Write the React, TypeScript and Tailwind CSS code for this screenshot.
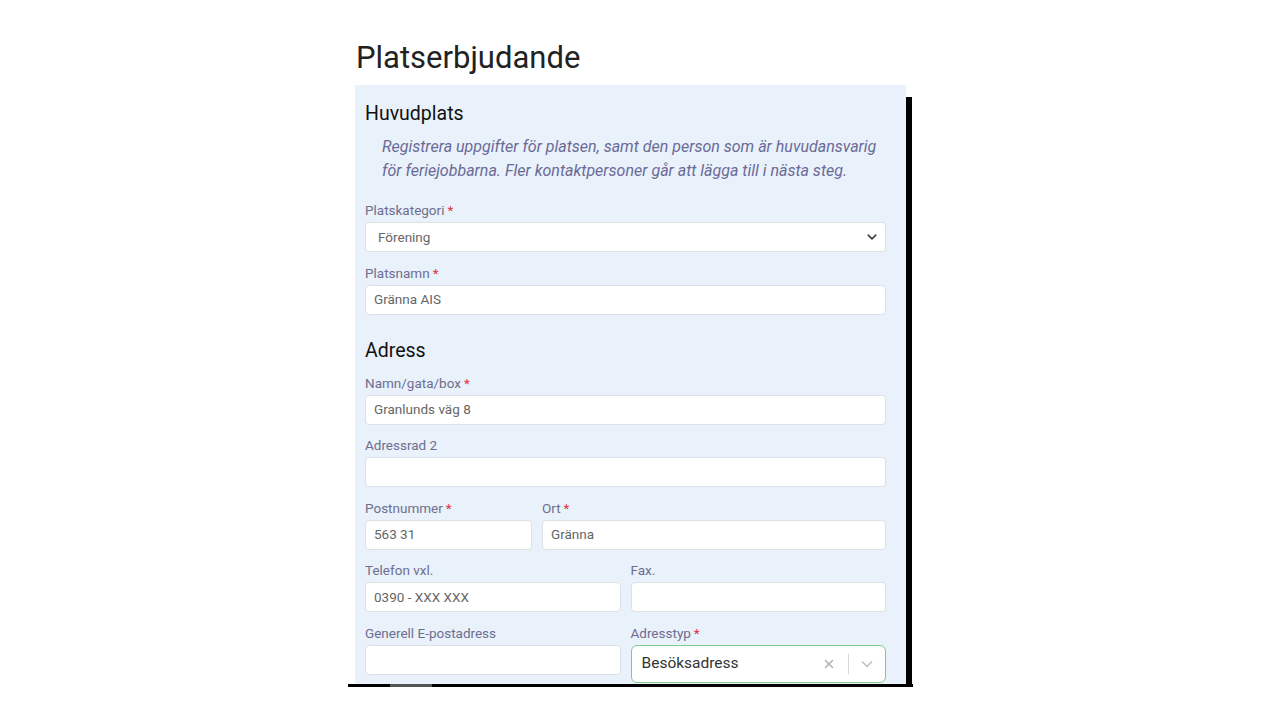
import React from "react";

type FieldProps = {
  label: string;
  required?: boolean;
  value?: string;
};

function Label({ label, required }: { label: string; required?: boolean }) {
  return (
    <div className="h-[20px] leading-[20px] text-[13.5px] text-[#6e6e90] mb-[2px] whitespace-nowrap">
      {label}
      {required && <span className="text-[#e0323f] ml-[3px]">*</span>}
    </div>
  );
}

function Field({ label, required, value }: FieldProps) {
  return (
    <div>
      <Label label={label} required={required} />
      <div className="h-[30px] bg-white border border-[#dde1e6] rounded-[4px] px-[8px] flex items-center text-[13.5px] text-[#666]">
        {value}
      </div>
    </div>
  );
}

export default function App() {
  return (
    <div className="min-h-[720px] bg-white font-['Roboto',sans-serif]">
      <div className="ml-[348px] w-[565px] pt-[39px]">
        <h1 className="pl-[8px] text-[31px] leading-[38px] text-[#222] mb-[8px]">Platserbjudande</h1>

        <div className="flex pl-[7px]">
          <div className="w-[551px] h-[599px] overflow-hidden bg-[#e9f1fb] pl-[10px] pr-[20px] pt-[17px]">
            <h2 className="text-[19.5px] leading-[24px] text-[#111]">Huvudplats</h2>
            <p className="mt-[9px] ml-[17px] italic text-[16px] leading-[24px] text-[#6a6a96]">
              Registrera uppgifter för platsen, samt den person som är huvudansvarig
              <br />
              för feriejobbarna. Fler kontaktpersoner går att lägga till i nästa steg.
            </p>

            <div className="mt-[17px] flex flex-col gap-[10.5px]">
              <div>
                <Label label="Platskategori" required />
                <div className="h-[30px] bg-white border border-[#dde1e6] rounded-[4px] pl-[12px] pr-[8px] flex items-center justify-between text-[13.5px] text-[#666]">
                  <span>Förening</span>
                  <svg width="10" height="10" viewBox="0 0 16 16" fill="none">
                    <path d="M2 5l6 6 6-6" stroke="#343a40" strokeWidth="2.4" strokeLinecap="round" strokeLinejoin="round" />
                  </svg>
                </div>
              </div>
              <Field label="Platsnamn" required value="Gränna AIS" />
            </div>

            <h2 className="mt-[24px] text-[19.5px] leading-[24px] text-[#111]">Adress</h2>

            <div className="mt-[10px] flex flex-col gap-[10.5px]">
              <Field label="Namn/gata/box" required value="Granlunds väg 8" />
              <Field label="Adressrad 2" />
              <div className="grid grid-cols-[167px_1fr] gap-x-[10px]">
                <Field label="Postnummer" required value="563 31" />
                <Field label="Ort" required value="Gränna" />
              </div>
              <div className="grid grid-cols-2 gap-x-[10px]">
                <Field label="Telefon vxl." value="0390 - XXX XXX" />
                <Field label="Fax." />
              </div>
              <div className="grid grid-cols-2 gap-x-[10px] items-start">
                <Field label="Generell E-postadress" />
                <div>
                  <Label label="Adresstyp" required />
                  <div className="h-[38px] bg-white border-[1.5px] border-[#7dcc8c] rounded-[6px] pl-[10px] pr-[12px] flex items-center text-[15.5px] text-[#333]">
                    <span className="flex-1">Besöksadress</span>
                    <svg width="10" height="10" viewBox="0 0 10 10" className="mr-[14px]">
                      <path d="M1 1l8 8M9 1l-8 8" stroke="#b3b3b3" strokeWidth="1.6" />
                    </svg>
                    <div className="w-px h-[20px] bg-[#d9d9d9] mr-[12px]" />
                    <svg width="12" height="8" viewBox="0 0 12 8" fill="none">
                      <path d="M1 1.5l5 5 5-5" stroke="#bdbdbd" strokeWidth="1.5" />
                    </svg>
                  </div>
                </div>
              </div>
            </div>
          </div>
          <div className="w-[6px] mt-[12px] bg-black" />
        </div>

        <div className="h-[3px] w-[565px] bg-black flex">
          <div className="ml-[42px] w-[42px] bg-[#555]" />
        </div>
      </div>
    </div>
  );
}
